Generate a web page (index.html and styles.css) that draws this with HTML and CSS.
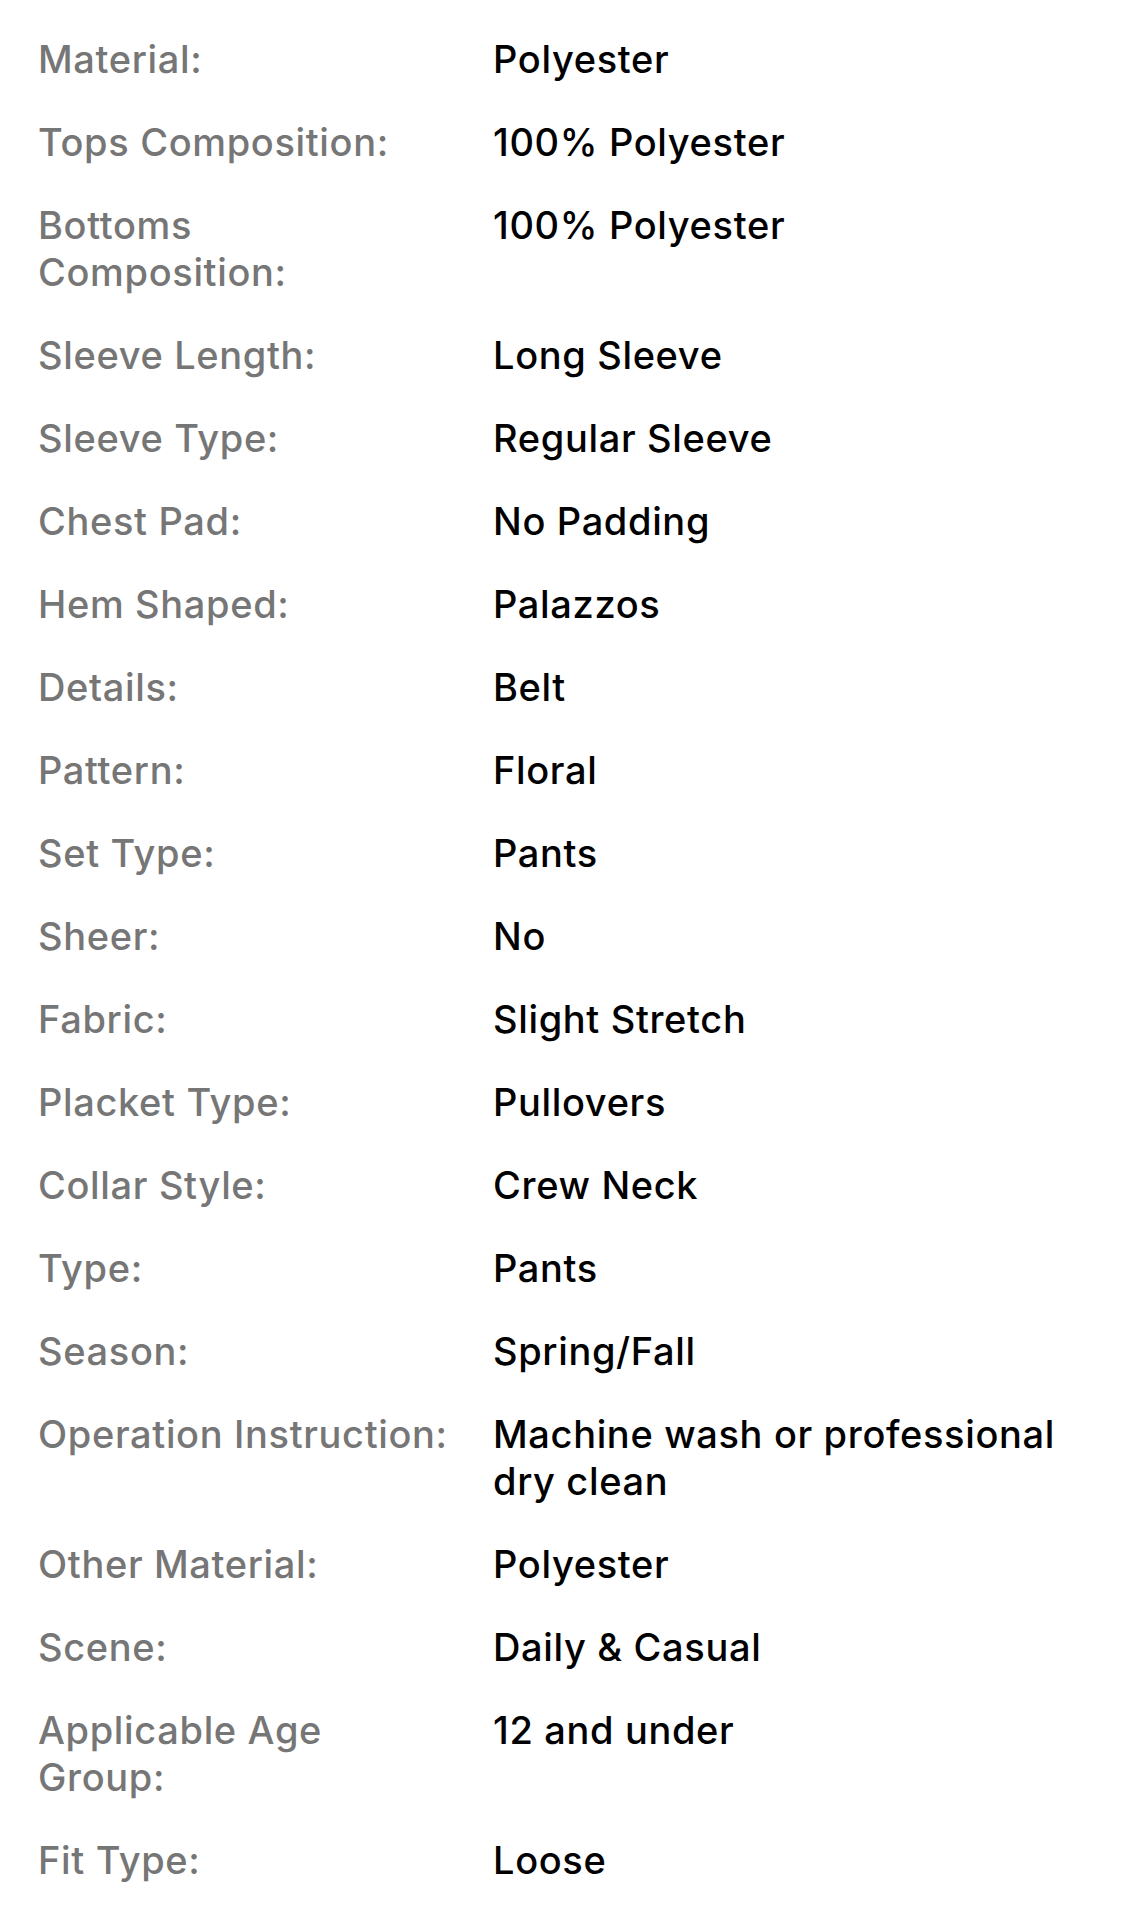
FILE: index.html
```html
<!DOCTYPE html>
<html lang="en">
<head>
<meta charset="utf-8">
<link rel="stylesheet" href="styles.css">
</head>
<body>
<dl class="specs">
  <dt>Material:</dt><dd>Polyester</dd>
  <dt>Tops Composition:</dt><dd>100% Polyester</dd>
  <dt>Bottoms<br>Composition:</dt><dd>100% Polyester</dd>
  <dt>Sleeve Length:</dt><dd>Long Sleeve</dd>
  <dt>Sleeve Type:</dt><dd>Regular Sleeve</dd>
  <dt>Chest Pad:</dt><dd>No Padding</dd>
  <dt>Hem Shaped:</dt><dd>Palazzos</dd>
  <dt>Details:</dt><dd>Belt</dd>
  <dt>Pattern:</dt><dd>Floral</dd>
  <dt>Set Type:</dt><dd>Pants</dd>
  <dt>Sheer:</dt><dd>No</dd>
  <dt>Fabric:</dt><dd>Slight Stretch</dd>
  <dt>Placket Type:</dt><dd>Pullovers</dd>
  <dt>Collar Style:</dt><dd>Crew Neck</dd>
  <dt>Type:</dt><dd>Pants</dd>
  <dt>Season:</dt><dd>Spring/Fall</dd>
  <dt>Operation Instruction:</dt><dd>Machine wash or professional dry clean</dd>
  <dt>Other Material:</dt><dd>Polyester</dd>
  <dt>Scene:</dt><dd>Daily &amp; Casual</dd>
  <dt>Applicable Age<br>Group:</dt><dd>12 and under</dd>
  <dt>Fit Type:</dt><dd>Loose</dd>
</dl>
</body>
</html>
```

FILE: styles.css
```css
html, body {
  margin: 0;
  padding: 0;
  background: #ffffff;
}

body {
  font-family: Inter, "Noto Sans", "Liberation Sans", sans-serif;
  -webkit-font-smoothing: antialiased;
}

.specs {
  margin: 0;
  padding: 36px 38px 20px 38px;
  display: grid;
  grid-template-columns: 430px 1fr;
  column-gap: 25px;
  row-gap: 36px;
  font-size: 38px;
  letter-spacing: 0.65px;
  line-height: 47px;
  font-weight: 500;
}

.specs dt {
  color: #767676;
  white-space: nowrap;
}

.specs dd {
  margin: 0;
  color: #000000;
}
```
